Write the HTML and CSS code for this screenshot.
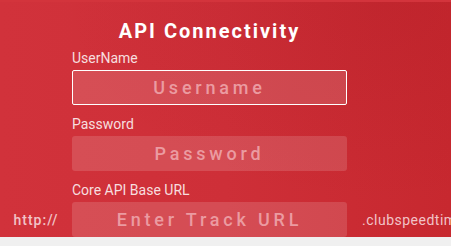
FILE: index.html
```html
<!DOCTYPE html>
<html lang="en">
<head>
    <meta charset="UTF-8">
    <meta name="viewport" content="width=device-width, initial-scale=1.0">
    <title>API Connectivity</title>
    <link rel="stylesheet" href="styles.css">
</head>
<body>

<div class="panel">
    <h1 class="title">API Connectivity</h1>

    <div class="row">
        <label for="username" class="label">UserName</label>
        <input type="text" id="username" class="field field-active" placeholder="Username">
    </div>

    <div class="row">
        <label for="password" class="label">Password</label>
        <input type="password" id="password" class="field" placeholder="Password">
    </div>

    <div class="row">
        <label for="track" class="label">Core API Base URL</label>
        <span class="prefix">http://</span>
        <input type="text" id="track" class="field" placeholder="Enter Track URL">
        <span class="suffix">.clubspeedtiming.com</span>
    </div>
</div>

</body>
</html>
```

FILE: styles.css
```css
* {
    box-sizing: border-box;
    margin: 0;
    padding: 0;
}
body {
    background: #f0f0f0;
    font-family: Roboto, "Liberation Sans", sans-serif;
    overflow: hidden;
}
.panel {
    height: 237px;
    padding-top: 17px;
    border-top: 2px solid #d3343c;
    background:
        radial-gradient(ellipse at 85% 0%, rgba(160, 20, 30, 0.2) 0%, rgba(160, 20, 30, 0) 60%),
        linear-gradient(90deg, #d1323b 0%, #ce2f38 50%, #c7282f 100%);
    overflow: hidden;
}
.title {
    display: block;
    width: 275px;
    margin-left: 72px;
    text-align: center;
    color: #fff;
    font-size: 20px;
    line-height: 24px;
    font-weight: 700;
    letter-spacing: 2px;
    margin-bottom: 7px;
}
.row {
    display: grid;
    grid-template-columns: 72px 275px 1fr;
    align-items: center;
    margin-bottom: 11px;
    white-space: nowrap;
}
.label {
    grid-column: 2;
    font-size: 14px;
    line-height: 16px;
    color: rgba(255, 255, 255, 0.85);
    margin-bottom: 4px;
}
.field {
    grid-column: 2;
    width: 275px;
    height: 35px;
    border: none;
    border-radius: 3px;
    background: rgba(255, 255, 255, 0.14);
    color: #fff;
    font-family: Roboto, "Liberation Sans", sans-serif;
    font-size: 18px;
    font-weight: 500;
    letter-spacing: 3.8px;
    text-align: center;
    outline: none;
}
.field::placeholder {
    color: #eb9ba1;
}
.field-active {
    border: 1px solid #fff;
    border-radius: 2px;
}
.prefix {
    grid-column: 1;
    grid-row: 2;
    text-align: center;
    font-size: 14px;
    font-weight: 500;
    letter-spacing: 1px;
    color: #f1c3c7;
}
.suffix {
    grid-column: 3;
    grid-row: 2;
    padding-left: 15px;
    font-size: 14px;
    letter-spacing: 0.5px;
    color: #f1c3c7;
}
```
